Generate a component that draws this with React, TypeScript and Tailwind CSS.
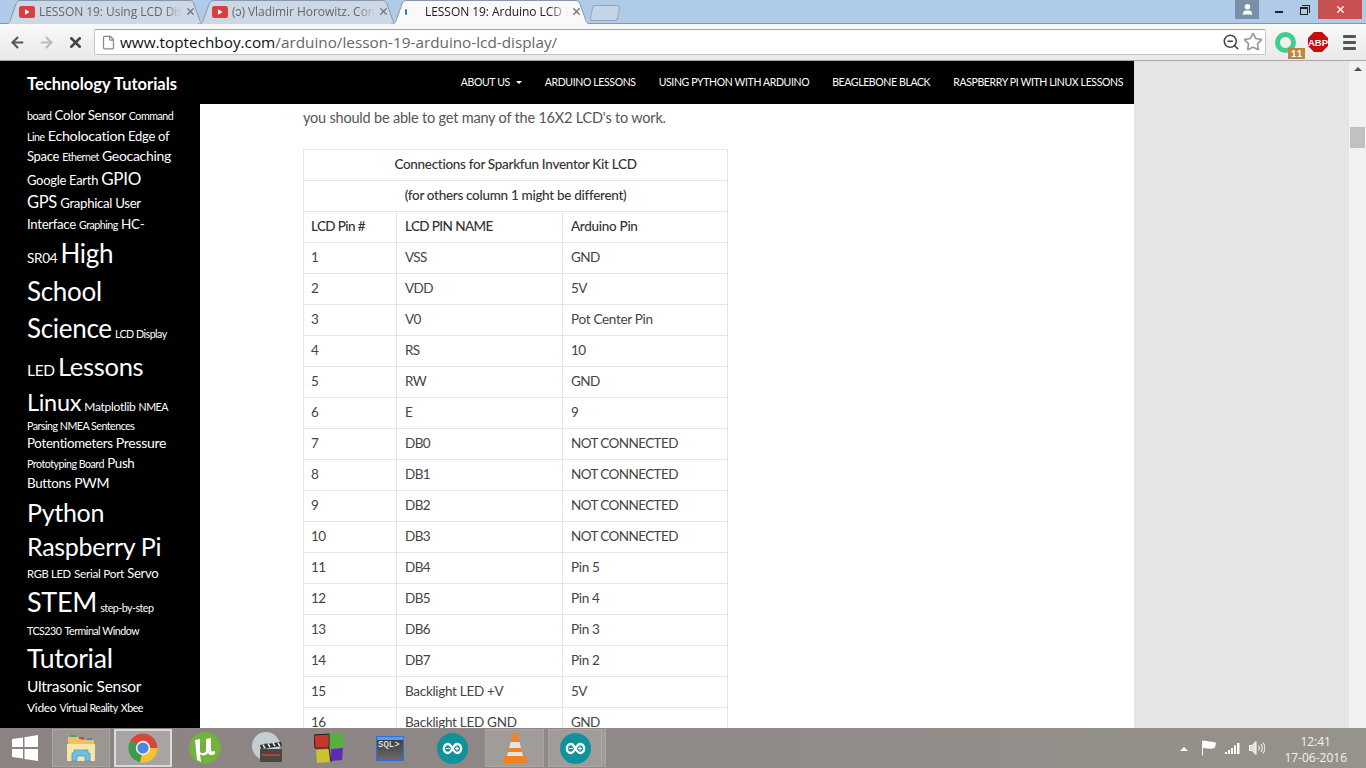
import React from 'react';
import { ArrowLeft, ArrowRight, X, Star, ZoomOut, File, User } from 'lucide-react';

const small = 'text-[10.67px] tracking-[-0.5px]';

// El salto de línea fija el mismo ajuste de la nube de etiquetas del sitio
const tags: [string, string][] = [
  ['board', small],
  ['Color Sensor', 'text-[13.3px]'],
  ['Command\nLine', small],
  ['Echolocation', 'text-[14.3px]'],
  ['Edge of\nSpace', 'text-[13px]'],
  ['Ethernet', small],
  ['Geocaching\n', 'text-[14px]'],
  ['Google Earth', 'text-[13px]'],
  ['GPIO\n', 'text-[17px]'],
  ['GPS', 'text-[16.5px]'],
  ['Graphical User\nInterface', 'text-[13.2px]'],
  ['Graphing', small],
  ['HC-\nSR04', 'text-[13.5px]'],
  ['High\nSchool\nScience', 'text-[26px]'],
  ['LCD Display\n', small],
  ['LED', 'text-[15.5px]'],
  ['Lessons\n', 'text-[25.5px]'],
  ['Linux', 'text-[23.5px]'],
  ['Matplotlib', 'text-[12px]'],
  ['NMEA', small],
  ['Parsing NMEA Sentences', `${small} block leading-[14px]`],
  ['Potentiometers', 'text-[13.3px]'],
  ['Pressure\n', 'text-[14px]'],
  ['Prototyping Board', small],
  ['Push\nButtons', 'text-[13.3px]'],
  ['PWM\n', 'text-[14px]'],
  ['Python\n', 'text-[25px]'],
  ['Raspberry Pi\n', 'text-[25px] leading-[1.35]'],
  ['RGB LED', 'text-[11.2px]'],
  ['Serial Port', 'text-[11.8px]'],
  ['Servo\n', 'text-[13px]'],
  ['STEM', 'text-[27px] leading-[1.4]'],
  ['step-by-step\n', small],
  ['TCS230', small],
  ['Terminal Window\n', small],
  ['Tutorial\n', 'text-[26.67px] leading-[1.3]'],
  ['Ultrasonic Sensor\n', 'text-[15.5px]'],
  ['Video', 'text-[12px]'],
  ['Virtual Reality', small],
  ['Xbee', small],
];

const pins = [
  ['1', 'VSS', 'GND'], ['2', 'VDD', '5V'], ['3', 'V0', 'Pot Center Pin'], ['4', 'RS', '10'],
  ['5', 'RW', 'GND'], ['6', 'E', '9'], ['7', 'DB0', 'NOT CONNECTED'], ['8', 'DB1', 'NOT CONNECTED'],
  ['9', 'DB2', 'NOT CONNECTED'], ['10', 'DB3', 'NOT CONNECTED'], ['11', 'DB4', 'Pin 5'], ['12', 'DB5', 'Pin 4'],
  ['13', 'DB6', 'Pin 3'], ['14', 'DB7', 'Pin 2'], ['15', 'Backlight LED +V', '5V'], ['16', 'Backlight LED GND', 'GND'],
];

const navItems = ['Arduino Lessons', 'Using Python with Arduino', 'Beaglebone Black', 'Raspberry Pi with Linux Lessons'];

const YouTubeIcon = () => (
  <svg width="16" height="12" viewBox="0 0 16 12" className="shrink-0">
    <rect width="16" height="12" rx="2.5" fill="#d8403f" />
    <path d="M6 3.2l4.5 2.8L6 8.8z" fill="#fff" />
  </svg>
);

const Tab = ({ active, title, icon }: { active?: boolean; title: string; icon: React.ReactNode }) => (
  <div className={`relative h-[24px] w-[200px] shrink-0 -mr-[7px] ${active ? 'z-10' : ''}`}>
    <svg className="absolute inset-0" width="200" height="24" viewBox="0 0 200 24">
      <path
        d="M0 24 C4 24 5 22 6 18 L11 4 C12 1.5 13 0.5 16 0.5 L184 0.5 C187 0.5 188 1.5 189 4 L194 18 C195 22 196 24 200 24"
        fill={active ? '#f9f9f9' : '#ccd8e6'}
        stroke="#8499ad"
      />
    </svg>
    <div className="relative flex h-full items-center pb-[1px] pl-[14px] pr-[9px]">
      {icon}
      <span
        className={`ml-[4px] flex-1 overflow-hidden whitespace-nowrap text-[12px] tracking-[-0.05px] [mask-image:linear-gradient(to_right,#000_88%,transparent)] ${active ? 'pl-[14px] text-[#222]' : 'text-[#666]'}`}
      >
        {title}
      </span>
      <X size={11} strokeWidth={3} className="ml-[3px] shrink-0 text-[#777]" />
    </div>
  </div>
);

const Arduino = () => (
  <svg width="31" height="31" viewBox="0 0 31 31" className="shrink-0">
    <circle cx="15.5" cy="15.5" r="15.5" fill="#0f929c" />
    <path
      d="M11 11c-5.5 0-5.5 9 0 9 4 0 5-9 9-9 5.5 0 5.5 9 0 9-4 0-5-9-9-9z"
      fill="none"
      stroke="#fff"
      strokeWidth="2.4"
    />
    <path d="M9 15.5h4M18 15.5h4M20 13.5v4" stroke="#fff" strokeWidth="1.2" />
  </svg>
);

const Chrome = () => (
  <svg width="30" height="30" viewBox="0 0 30 30">
    <path d="M15 15L2.4 7.75A14.5 14.5 0 0 1 29.5 15Z" fill="#d8463a" />
    <path d="M15 15L29.5 15A14.5 14.5 0 0 1 12 29.2Z" fill="#f4c430" />
    <path d="M15 15L12 29.2A14.5 14.5 0 0 1 2.4 7.75Z" fill="#3d9b4a" />
    <circle cx="15" cy="15" r="7.2" fill="#f2f2f2" />
    <circle cx="15" cy="15" r="5.6" fill="#4b86e0" />
  </svg>
);

export default function App() {
  return (
    <div className="flex h-[768px] w-[1366px] flex-col overflow-hidden bg-white font-['Lato',sans-serif]">
      {/* Barra de pestañas */}
      <div className="flex h-[24px] shrink-0 justify-between border-b border-[#8499ad] bg-[#afcbe8] pl-[5px]">
        <div className="-mb-px flex items-end font-['Open_Sans',sans-serif]">
          <Tab title="LESSON 19: Using LCD Dis" icon={<YouTubeIcon />} />
          <Tab title="(ɔ) Vladimir Horowitz. Con" icon={<YouTubeIcon />} />
          <Tab active title="LESSON 19: Arduino LCD D" icon={<span className="h-[6px] w-[2px] shrink-0 rounded-full bg-[#2a7ae2]" />} />
          <div className="mb-[3px] ml-[7px] h-[16px] w-[28px] -skew-x-12 rounded-[3px] border border-[#8fa5bb] bg-[#c5d5e6]" />
        </div>
        <div className="flex items-start">
          <div className="flex h-[19px] w-[24px] items-center justify-center bg-[#7a90a8]">
            <User size={13} fill="#fff" className="text-white" />
          </div>
          <div className="ml-[16px] mt-[11px] h-[2px] w-[8px] bg-[#222]" />
          <div className="relative ml-[17px] mt-[7px] h-[8px] w-[8px] border border-t-2 border-[#222]">
            <span className="absolute -right-[3px] -top-[4px] h-[8px] w-[8px] border-r border-t border-[#222]" />
          </div>
          <div className="ml-[10px] flex h-[19px] w-[44px] items-center justify-center bg-[#c75050] text-white">
            <X size={11} strokeWidth={3} />
          </div>
          <div className="w-[4px]" />
        </div>
      </div>

      {/* Barra de direcciones */}
      <div className="flex h-[37px] shrink-0 items-center border-b border-[#a8a8a8] bg-gradient-to-b from-[#f9f9f9] to-[#e9e9e9]">
        <ArrowLeft size={17} strokeWidth={3} className="ml-[9px] text-[#555]" />
        <ArrowRight size={17} strokeWidth={3} className="ml-[12px] text-[#bbb]" />
        <X size={17} strokeWidth={3.5} className="ml-[12px] text-[#444]" />
        <div className="ml-[10px] flex h-[26px] w-[1172px] items-center rounded-[2px] border border-[#c4c4c4] border-t-[#a5a5a5] bg-white pl-[6px]">
          <File size={15} className="text-[#888]" />
          <span className="ml-[4px] whitespace-nowrap font-['Open_Sans',sans-serif] text-[15.3px] text-[#666]">
            <span className="text-[#111]">www.toptechboy.com</span>/arduino/lesson-19-arduino-lcd-display/
          </span>
          <div className="ml-auto mr-[2px] flex items-center gap-[3px]">
            <ZoomOut size={18} className="text-[#444]" />
            <Star size={20} className="text-[#999]" />
          </div>
        </div>
        <div className="relative ml-[9px] h-[21px] w-[21px] rounded-full border-[5px] border-[#3fce8b]">
          <span className="absolute -bottom-[11px] -right-[14px] flex h-[11px] w-[17px] items-center justify-center bg-[#c0843a] text-[10px] font-bold text-white">11</span>
        </div>
        <svg width="20" height="20" viewBox="0 0 20 20" className="ml-[12px]">
          <path d="M6 0h8l6 6v8l-6 6H6l-6-6V6z" fill="#c70d0d" />
          <text x="10" y="13.5" textAnchor="middle" fontFamily="Liberation Sans" fontWeight="700" fontSize="9.5" fill="#fff">ABP</text>
        </svg>
        <div className="ml-[15px] flex w-[13px] flex-col gap-[3px]">
          <span className="h-[3px] rounded-[1px] bg-[#555]" />
          <span className="h-[3px] rounded-[1px] bg-[#555]" />
          <span className="h-[3px] rounded-[1px] bg-[#555]" />
        </div>
      </div>

      {/* Página */}
      <div className="flex min-h-0 flex-1 bg-[#e5e5e5]">
        <div className="flex w-[1134px] shrink-0 flex-col">
          <div className="flex h-[43px] shrink-0 items-center justify-between bg-black pl-[27px] pr-[11px] text-white">
            <span className="mt-[3px] text-[16.5px] font-bold">Technology Tutorials</span>
            <nav className="flex items-center gap-[23px] text-[10.5px] uppercase tracking-[-0.37px]">
              <span className="flex items-center gap-[6px]">
                About Us
                <span className="h-0 w-0 border-x-[3px] border-t-[3px] border-x-transparent border-t-white" />
              </span>
              {navItems.map((n) => (
                <span key={n}>{n}</span>
              ))}
            </nav>
          </div>
          <div className="flex min-h-0 flex-1">
            <aside className="w-[200px] shrink-0 overflow-hidden whitespace-pre-line bg-black pl-[27px] pr-[10px] pt-[2px] text-[13.5px] leading-[1.45] tracking-[-0.3px] text-white">
              {tags.map(([t, c]) => (
                <React.Fragment key={t}>
                  <span className={c}>{t}</span>{' '}
                </React.Fragment>
              ))}
            </aside>
            <main className="flex-1 overflow-hidden bg-white pl-[103px] pt-[4px]">
              <p className="text-[14.5px] leading-[20px] tracking-[-0.2px] text-[#555]">you should be able to get many of the 16X2 LCD's to work.</p>
              <table className="mt-[21px] w-[424px] table-fixed border-collapse text-[13.5px] tracking-[-0.3px] text-[#333]">
                <colgroup>
                  <col className="w-[93px]" />
                  <col className="w-[166px]" />
                  <col className="w-[165px]" />
                </colgroup>
                <tbody>
                  <tr className="h-[31px]">
                    <td colSpan={3} className="border border-[#e5e5e5] pb-[2px] text-center font-medium">Connections for Sparkfun Inventor Kit LCD</td>
                  </tr>
                  <tr className="h-[31px]">
                    <td colSpan={3} className="border border-[#e5e5e5] pb-[2px] text-center font-medium">(for others column 1 might be different)</td>
                  </tr>
                  <tr className="h-[31px] font-medium">
                    <td className="border border-[#e5e5e5] pb-[2px] pl-[7px] tracking-[-0.6px]">LCD Pin #</td>
                    <td className="border border-[#e5e5e5] pb-[2px] pl-[8px] tracking-[-0.6px]">LCD PIN NAME</td>
                    <td className="border border-[#e5e5e5] pb-[2px] pl-[8px]">Arduino Pin</td>
                  </tr>
                  {pins.map((r) => (
                    <tr key={r[0]} className="h-[31px] text-[#444]">
                      {r.map((c, i) => (
                        <td
                          key={i}
                          className={`border border-[#e5e5e5] pb-[2px] ${i === 0 ? 'pl-[7px]' : 'pl-[8px]'} ${c === c.toUpperCase() ? 'tracking-[-0.6px]' : ''}`}
                        >
                          {c}
                        </td>
                      ))}
                    </tr>
                  ))}
                </tbody>
              </table>
            </main>
          </div>
        </div>
        <div className="flex-1" />
        <div className="flex w-[17px] shrink-0 flex-col items-center bg-[#f1f1f1]">
          <span className="mt-[6px] h-0 w-0 border-x-[4px] border-b-[4px] border-x-transparent border-b-[#505050]" />
          <div className="mt-[56px] h-[21px] w-[15px] bg-[#c1c1c1]" />
        </div>
      </div>

      {/* Barra de tareas */}
      <div className="flex h-[40px] shrink-0 items-center bg-gradient-to-r from-[#8a8382] via-[#8f8988] to-[#96938a]">
        <svg width="26" height="26" viewBox="0 0 26 26" className="ml-[12px] shrink-0">
          <path d="M0 4l11-1.5V12H0zM12.5 2.3L26 0v12H12.5zM0 14h11v9.5L0 22zM12.5 14H26v12l-13.5-2z" fill="#fff" />
        </svg>
        <div className="ml-[14px] flex h-[38px] w-[58px] items-center justify-center border border-[#a9a5a3] bg-[#9c9693]">
          <svg width="32" height="32" viewBox="0 0 32 32">
            <path d="M3 5h11l2 3h13v5H3z" fill="#e8c468" />
            <rect x="6" y="3" width="5" height="2" fill="#3aa648" />
            <rect x="14" y="5" width="5" height="2" fill="#d2453a" />
            <rect x="22" y="6" width="5" height="2" fill="#3a8fd2" />
            <path d="M2 12h28v17H2z" fill="#f9e6a2" />
            <path d="M9 18h14v3h2v8h-5v-5h-8v5H7v-8h2z" fill="#6cc0e8" stroke="#3d8fbd" strokeWidth="0.7" />
          </svg>
        </div>
        <div className="ml-[4px] flex h-[38px] w-[58px] items-center justify-center border-2 border-[#dcdad9] bg-[#a8a4a3]">
          <Chrome />
        </div>
        <svg width="32" height="32" viewBox="0 0 32 32" className="ml-[17px] shrink-0">
          <circle cx="16" cy="16" r="16" fill="#74b23e" />
          <path d="M6 8l5-1v12c0 3 5 3 6 0V7l5-1v12c0 1 1 2 4 1v3c-3 2-6 1-7-1-2 3-6 3-8 1l1 8-4-2z" fill="#fff" />
        </svg>
        <svg width="31" height="32" viewBox="0 0 31 32" className="ml-[31px] shrink-0">
          <circle cx="14" cy="14" r="14" fill="#c3cdd3" />
          <circle cx="14" cy="14" r="3" fill="#8a8f94" />
          <rect x="8" y="17" width="22" height="13" fill="#4a4644" />
          <rect x="10" y="22" width="18" height="2" fill="#b5403a" />
          <path d="M8 13l21-3 1 4-21 3z" fill="#2e2c2b" />
          <path d="M11 13l2 3M16 12l2 3M21 11l2 3M26 11l2 3" stroke="#eee" strokeWidth="1.5" />
        </svg>
        <svg width="30" height="30" viewBox="0 0 30 30" className="ml-[31px] shrink-0">
          <path d="M0 2l14-1 1 14-14 1z" fill="#c8352c" />
          <path d="M16 1l13-1 1 14-14 1z" fill="#55b13c" />
          <path d="M2 17l13-1 1 13-13 1z" fill="#c9c32e" />
          <path d="M17 16l12-1-1 12-11 1z" fill="#5a2db5" />
          <path d="M0 2l15-1v14H1zM15 15l2 14" fill="none" stroke="#222" strokeWidth="1" />
        </svg>
        <div className="ml-[32px] flex h-[25px] w-[28px] shrink-0 flex-col border border-[#2f6fe0] bg-gradient-to-b from-[#3a3a3a] to-[#6a6a6a]">
          <div className="h-[3px] shrink-0 bg-[#5a9be8]" />
          <span className="pl-[1px] font-['Liberation_Mono',monospace] text-[9px] leading-[10px] text-white">SQL&gt;</span>
        </div>
        <div className="ml-[33px] shrink-0"><Arduino /></div>
        <div className="ml-[17px] flex h-[38px] w-[59px] items-center justify-center border border-[#a9a5a3] bg-[#a19c98]">
          <svg width="28" height="32" viewBox="0 0 28 32">
            <path d="M12 1h4l7 25H5z" fill="#f58220" />
            <path d="M9.5 10h9l1.6 6H8zM7 20h14l1 4H6z" fill="#e4e4e4" />
            <path d="M4 24l-3 5 2 2h22l2-2-3-5-2 2H6z" fill="#f58220" />
          </svg>
        </div>
        <div className="ml-[4px] flex h-[38px] w-[54px] items-center justify-center border border-[#a9a5a3] bg-[#a19c98]">
          <Arduino />
        </div>
        <div className="h-[38px] w-[4px] border-r border-[#a9a5a3] bg-[#a19c98]" />
        <div className="ml-auto flex items-center pr-[19px] text-[#f2f2f2]">
          <span className="mt-[1px] h-0 w-0 border-x-[4px] border-b-[4px] border-x-transparent border-b-white" />
          <svg width="16" height="16" viewBox="0 0 16 16" className="ml-[13px]" fill="none" stroke="#fff">
            <path d="M1.5 0.5v15" />
            <path d="M2 1.5c3-1 5 1 8 .5l4.5 1-1 4.5c-3 1.5-6 .5-11.5 0z" fill="#fff" />
          </svg>
          <svg width="15" height="11" viewBox="0 0 15 11" className="ml-[8px]" fill="#fff">
            <rect x="0" y="9" width="2" height="2" />
            <rect x="3" y="7" width="2" height="4" />
            <rect x="6" y="5" width="2" height="6" />
            <rect x="9" y="2.5" width="2" height="8.5" />
            <rect x="12" y="0" width="2.5" height="11" />
          </svg>
          <svg width="16" height="14" viewBox="0 0 16 14" className="ml-[9px]" fill="none" stroke="#fff">
            <path d="M0.5 4.5h2.5l4-4v13l-4-4H0.5z" fill="#ddd" />
            <path d="M9.5 4.5c1 1.5 1 3.5 0 5M12 3c1.7 2.5 1.7 5.5 0 8M14 1.5c2.4 3.5 2.4 7.5 0 11" />
          </svg>
          <div className="ml-[19px] mt-[3px] flex flex-col items-center font-['Open_Sans',sans-serif] text-[12px] leading-[16px]">
            <span>12:41</span>
            <span>17-06-2016</span>
          </div>
        </div>
      </div>
    </div>
  );
}
